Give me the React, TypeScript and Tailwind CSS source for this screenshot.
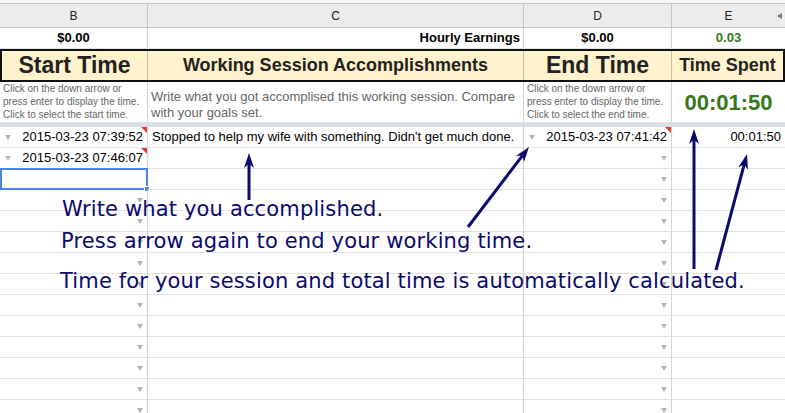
import type { ReactNode } from 'react'

const widths = ['w-[148px]', 'w-[376px]', 'w-[148px]', 'w-[113px]']

const NAVY = '#0a0a6e'

type Arrow = { x1: number; y1: number; x2: number; y2: number }

const arrows: Arrow[] = [
  { x1: 249, y1: 200, x2: 249, y2: 153 },
  { x1: 468, y1: 227, x2: 529, y2: 147 },
  { x1: 694, y1: 269, x2: 694, y2: 129 },
  { x1: 716, y1: 270, x2: 747, y2: 154 },
]

function headPoints(a: Arrow) {
  const dx = a.x2 - a.x1
  const dy = a.y2 - a.y1
  const len = Math.hypot(dx, dy)
  const ux = dx / len
  const uy = dy / len
  const nx = -uy
  const ny = ux
  const L = 15
  const W = 5
  const bx = a.x2 - ux * L
  const by = a.y2 - uy * L
  const mx = a.x2 - ux * L * 0.72
  const my = a.y2 - uy * L * 0.72
  return {
    points: `${a.x2},${a.y2} ${bx + nx * W},${by + ny * W} ${mx},${my} ${bx - nx * W},${by - ny * W}`,
    ex: mx,
    ey: my,
  }
}

function DropArrow({ side }: { side: 'left' | 'right' }) {
  return (
    <span
      className={`absolute top-[8px] h-0 w-0 border-x-[3.5px] border-t-[5px] border-x-transparent border-t-[#b4b4b4] ${
        side === 'left' ? 'left-[5px]' : 'right-[4px]'
      }`}
    />
  )
}

function Note() {
  return (
    <span className="absolute right-0 top-0 h-0 w-0 border-l-[6px] border-t-[6px] border-l-transparent border-t-[#dd3b2c]" />
  )
}

function Cell({ i, children, className = '' }: { i: number; children?: ReactNode; className?: string }) {
  return (
    <div
      className={`relative flex h-[21px] shrink-0 items-end border-b border-[#e2e2e2] ${widths[i]} ${
        i < 3 ? 'border-r border-r-[#d4d4d4]' : ''
      } ${className}`}
    >
      {children}
    </div>
  )
}

type RowSpec = {
  b?: string
  c?: string
  d?: string
  e?: string
  bArrow?: 'left' | 'right'
  dArrow?: 'left' | 'right'
  bNote?: boolean
  dNote?: boolean
  selected?: boolean
}

const rows: RowSpec[] = [
  {
    b: '2015-03-23 07:39:52',
    c: "Stopped to help my wife with something. Didn't get much done.",
    d: '2015-03-23 07:41:42',
    e: '00:01:50',
    bArrow: 'left',
    dArrow: 'left',
    bNote: true,
    dNote: true,
  },
  { b: '2015-03-23 07:46:07', bArrow: 'left', bNote: true, dArrow: 'right' },
  { selected: true, dArrow: 'right' },
  ...Array.from({ length: 11 }, () => ({ bArrow: 'right' as const, dArrow: 'right' as const })),
]

export default function App() {
  return (
    <div className="relative h-[413px] w-[785px] overflow-hidden bg-white font-['Liberation_Sans',Arial,sans-serif] text-[13px] text-black">
      {/* top strip */}
      <div className="h-[4px] border-b border-[#c8c8c8] bg-[#f6f6f6]" />

      {/* column letters */}
      <div className="flex h-[24px] border-b border-[#c4c4c4] bg-[#ececec] text-[12px] text-[#222]">
        {['B', 'C', 'D', 'E'].map((l, i) => (
          <div
            key={l}
            className={`relative flex shrink-0 items-center justify-center ${widths[i]} ${i < 3 ? 'border-r border-[#c4c4c4]' : ''}`}
          >
            {l}
            {i === 3 && (
              <span className="absolute right-[3px] top-[9px] h-0 w-0 border-y-[3.5px] border-r-[5px] border-y-transparent border-r-[#777]" />
            )}
          </div>
        ))}
      </div>

      {/* totals row */}
      <div className="flex h-[21px] border-b border-[#e2e2e2] text-[13px] font-bold leading-[20px]">
        <div className={`flex shrink-0 items-end justify-center border-r border-[#d4d4d4] ${widths[0]}`}>$0.00</div>
        <div className={`flex shrink-0 items-end justify-end border-r border-[#d4d4d4] pr-[3px] ${widths[1]}`}>
          Hourly Earnings
        </div>
        <div className={`flex shrink-0 items-end justify-center border-r border-[#d4d4d4] ${widths[2]}`}>$0.00</div>
        <div className={`flex shrink-0 items-end justify-center text-[#38761d] ${widths[3]}`}>0.03</div>
      </div>

      {/* title row */}
      <div className="flex h-[33px] border-y-2 border-x-2 border-[#111] bg-[#fff2cc] font-bold text-[#222]">
        <div className="flex w-[146px] shrink-0 items-center justify-center border-r border-[#c8c0a0] text-[23px]">
          Start Time
        </div>
        <div className="flex w-[376px] shrink-0 items-center justify-center border-r border-[#c8c0a0] text-[18px]">
          Working Session Accomplishments
        </div>
        <div className="flex w-[148px] shrink-0 items-center justify-center border-r border-[#c8c0a0] text-[23px]">
          End Time
        </div>
        <div className="flex w-[111px] shrink-0 items-center justify-center text-[18px]">Time Spent</div>
      </div>

      {/* instructions row */}
      <div className="flex h-[41px] border-b border-[#e2e2e2]">
        <div
          className={`flex shrink-0 items-end border-r border-[#d4d4d4] pb-[1px] pl-[3px] text-[10px] leading-[13px] text-[#666] ${widths[0]}`}
        >
          Click on the down arrow or press enter to display the time. Click to select the start time.
        </div>
        <div
          className={`flex shrink-0 items-end border-r border-[#d4d4d4] px-[3px] pb-[1px] text-[13px] leading-[16px] text-[#666] ${widths[1]}`}
        >
          Write what you got accomplised this working session. Compare with your goals set.
        </div>
        <div
          className={`flex shrink-0 items-end border-r border-[#d4d4d4] pb-[1px] pl-[3px] text-[10px] leading-[13px] text-[#666] ${widths[2]}`}
        >
          Click on the down arrow or press enter to display the time. Click to select the end time.
        </div>
        <div className={`flex shrink-0 items-center justify-center text-[22px] font-bold text-[#38761d] ${widths[3]}`}>
          00:01:50
        </div>
      </div>

      {/* frozen divider */}
      <div className="h-[4px] bg-[#d9dee6]" />

      {/* data rows */}
      {rows.map((r, idx) => (
        <div key={idx} className="flex leading-[20px]">
          <Cell i={0} className="justify-end pr-[4px]">
            {r.bArrow && <DropArrow side={r.bArrow} />}
            {r.bNote && <Note />}
            {r.b}
            {r.selected && (
              <>
                <span className="absolute -top-[1px] left-0 h-[22px] w-[148px] border-2 border-[#4a86e8]" />
                <span className="absolute -bottom-[3px] -right-[3px] h-[6px] w-[6px] border border-white bg-[#4a86e8]" />
              </>
            )}
          </Cell>
          <Cell i={1} className="pl-[4px]">
            {r.c}
          </Cell>
          <Cell i={2} className="justify-end pr-[4px]">
            {r.dArrow && <DropArrow side={r.dArrow} />}
            {r.dNote && <Note />}
            {r.d}
          </Cell>
          <Cell i={3} className="justify-end pr-[4px]">
            {r.e}
          </Cell>
        </div>
      ))}

      {/* annotation arrows */}
      <svg className="pointer-events-none absolute left-0 top-0" width={785} height={413} viewBox="0 0 785 413">
        {arrows.map((a, i) => {
          const h = headPoints(a)
          return (
            <g key={i}>
              <line x1={a.x1} y1={a.y1} x2={h.ex} y2={h.ey} stroke={NAVY} strokeWidth={3} />
              <polygon points={h.points} fill={NAVY} />
            </g>
          )
        })}
      </svg>

      {/* annotation text */}
      <div className="pointer-events-none absolute left-[62px] top-[199px] whitespace-nowrap font-['DejaVu_Sans',sans-serif] text-[21px] leading-[21px] tracking-[0.15px] text-[#0a0a6e]">
        Write what you accomplished.
      </div>
      <div className="pointer-events-none absolute left-[61px] top-[231px] whitespace-nowrap font-['DejaVu_Sans',sans-serif] text-[21px] leading-[21px] tracking-[0.15px] text-[#0a0a6e]">
        Press arrow again to end your working time.
      </div>
      <div className="pointer-events-none absolute left-[60px] top-[271px] whitespace-nowrap font-['DejaVu_Sans',sans-serif] text-[21px] leading-[21px] tracking-[0.15px] text-[#0a0a6e]">
        Time for your session and total time is automatically calculated.
      </div>
    </div>
  )
}
